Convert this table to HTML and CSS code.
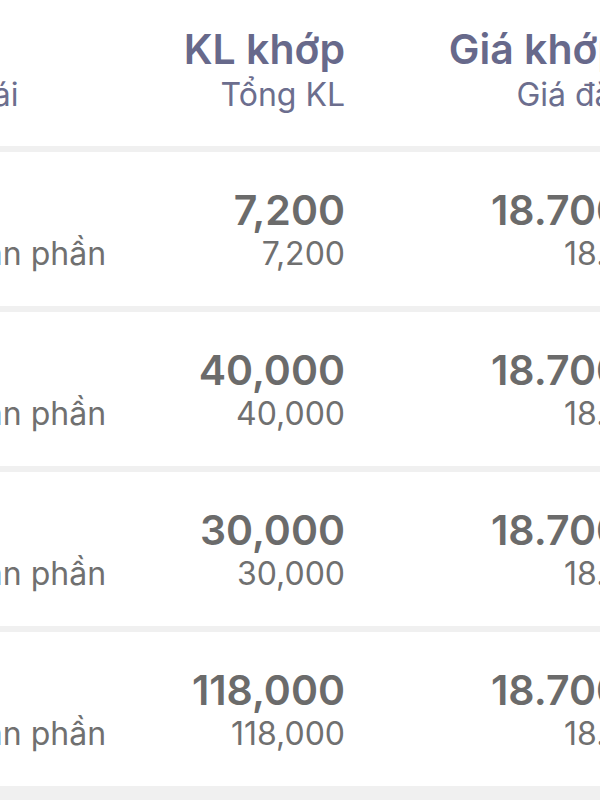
FILE: index.html
```html
<!DOCTYPE html>
<html lang="vi">
<head>
<meta charset="utf-8">
<link rel="stylesheet" href="styles.css">
</head>
<body>
<div class="table">
  <div class="row header">
    <div class="cell c1"><div class="l1">&nbsp;</div><div class="l2">Trạng thái</div></div>
    <div class="cell c2"><div class="l1">KL khớp</div><div class="l2">Tổng KL</div></div>
    <div class="cell c3"><div class="l1">Giá khớp</div><div class="l2">Giá đặt</div></div>
  </div>
  <div class="row">
    <div class="cell c1"><div class="l1">&nbsp;</div><div class="l2">Khớp toàn phần</div></div>
    <div class="cell c2"><div class="l1">7,200</div><div class="l2">7,200</div></div>
    <div class="cell c3"><div class="l1">18.700</div><div class="l2">18.7</div></div>
  </div>
  <div class="row">
    <div class="cell c1"><div class="l1">&nbsp;</div><div class="l2">Khớp toàn phần</div></div>
    <div class="cell c2"><div class="l1">40,000</div><div class="l2">40,000</div></div>
    <div class="cell c3"><div class="l1">18.700</div><div class="l2">18.7</div></div>
  </div>
  <div class="row">
    <div class="cell c1"><div class="l1">&nbsp;</div><div class="l2">Khớp toàn phần</div></div>
    <div class="cell c2"><div class="l1">30,000</div><div class="l2">30,000</div></div>
    <div class="cell c3"><div class="l1">18.700</div><div class="l2">18.7</div></div>
  </div>
  <div class="row">
    <div class="cell c1"><div class="l1">&nbsp;</div><div class="l2">Khớp toàn phần</div></div>
    <div class="cell c2"><div class="l1">118,000</div><div class="l2">118,000</div></div>
    <div class="cell c3"><div class="l1">18.700</div><div class="l2">18.7</div></div>
  </div>
</div>
</body>
</html>
```

FILE: styles.css
```css
html, body {
  margin: 0;
  padding: 0;
  background: #f0f0f0;
  overflow: hidden;
  width: 600px;
  height: 800px;
}
.table {
  margin-left: -133px;
  width: 756px;
  display: flex;
  flex-direction: column;
  gap: 6px;
  font-family: Inter, "Noto Sans", sans-serif;
}
.row {
  background: #ffffff;
  height: 154px;
  box-sizing: border-box;
  padding-top: 34px;
  display: grid;
  grid-template-columns: 250px 228px 278px;
  color: #6b6b6b;
}
.header {
  height: 146px;
  padding-top: 25px;
  color: #67698b;
}
.cell {
  white-space: nowrap;
}
.c1 { text-align: left; }
.c2, .c3 { text-align: right; }
.l1 {
  font-size: 41px;
  line-height: 48px;
  font-weight: 600;
}
.l2 {
  font-size: 32px;
  line-height: 40px;
  font-weight: 400;
  color: #707070;
}
.header .l2 {
  color: #6c6e8e;
  margin-top: 2px;
}
```
